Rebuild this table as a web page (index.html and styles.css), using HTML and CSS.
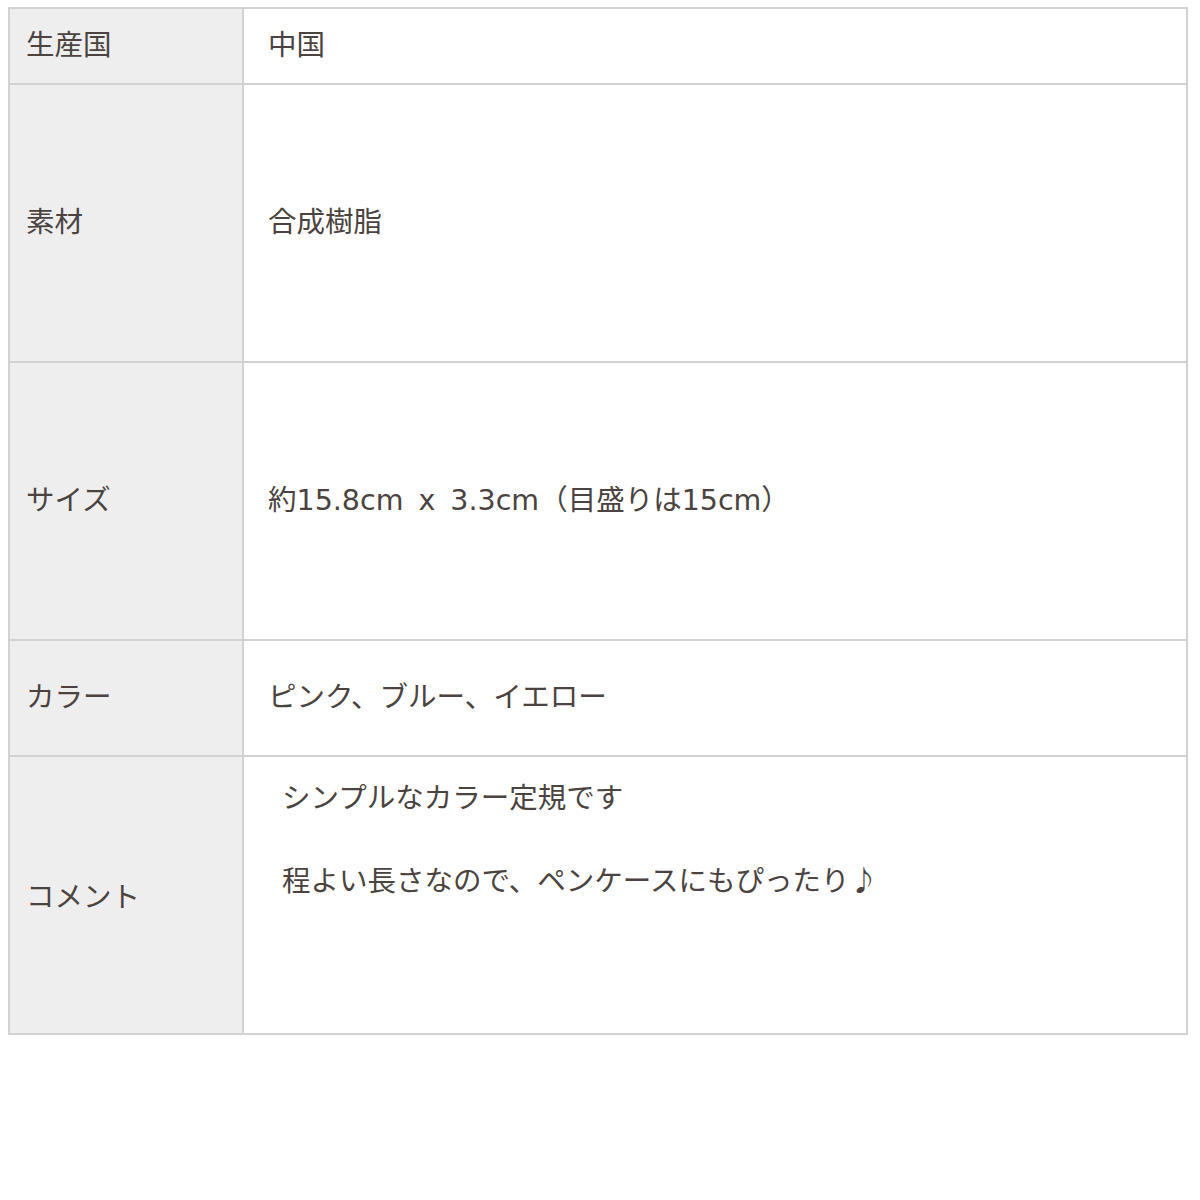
FILE: index.html
```html
<!DOCTYPE html>
<html lang="ja">
<head>
<meta charset="utf-8">
<link rel="stylesheet" href="styles.css">
</head>
<body>
<table class="spec">
  <tr class="row-s">
    <th>生産国</th>
    <td>中国</td>
  </tr>
  <tr class="row-l">
    <th>素材</th>
    <td>合成樹脂</td>
  </tr>
  <tr class="row-l">
    <th>サイズ</th>
    <td class="size">約15.8cm x 3.3cm（目盛りは15cm）</td>
  </tr>
  <tr class="row-m">
    <th>カラー</th>
    <td>ピンク、ブルー、イエロー</td>
  </tr>
  <tr class="row-l">
    <th class="comment-label">コメント</th>
    <td class="comment">
      <p>シンプルなカラー定規です</p>
      <p>程よい長さなので、ペンケースにもぴったり<span class="note">♪</span></p>
    </td>
  </tr>
</table>
</body>
</html>
```
FILE: styles.css
```css
html, body {
  margin: 0;
  padding: 0;
  background: #ffffff;
}
body {
  padding: 7px 0 0 8px;
  font-family: "DejaVu Sans", "Noto Sans CJK JP", sans-serif;
  color: #4a4340;
}
.spec {
  border-collapse: collapse;
  width: 1180px;
  font-size: 28.5px;
}
.spec th,
.spec td {
  border: 2px solid #d2d2d2;
  vertical-align: middle;
  text-align: left;
  font-weight: normal;
  line-height: 40px;
}
.spec th {
  width: 216px;
  background: #eeeeee;
  padding: 0 0 1px 16px;
}
.spec td {
  background: #ffffff;
  padding: 0 0 1px 24px;
}
.spec th.comment-label {
  padding: 6px 0 0 16px;
}
.row-s { height: 76px; }
.row-m { height: 116px; }
.row-l { height: 278px; }
.spec td.size {
  word-spacing: 6px;
}
.spec td.comment {
  vertical-align: top;
  padding: 22px 0 0 38px;
}
.comment p {
  margin: 0 0 43px 0;
  height: 40px;
}
.note {
  font-family: "Noto Sans CJK JP", sans-serif;
  line-height: 1;
}
```
